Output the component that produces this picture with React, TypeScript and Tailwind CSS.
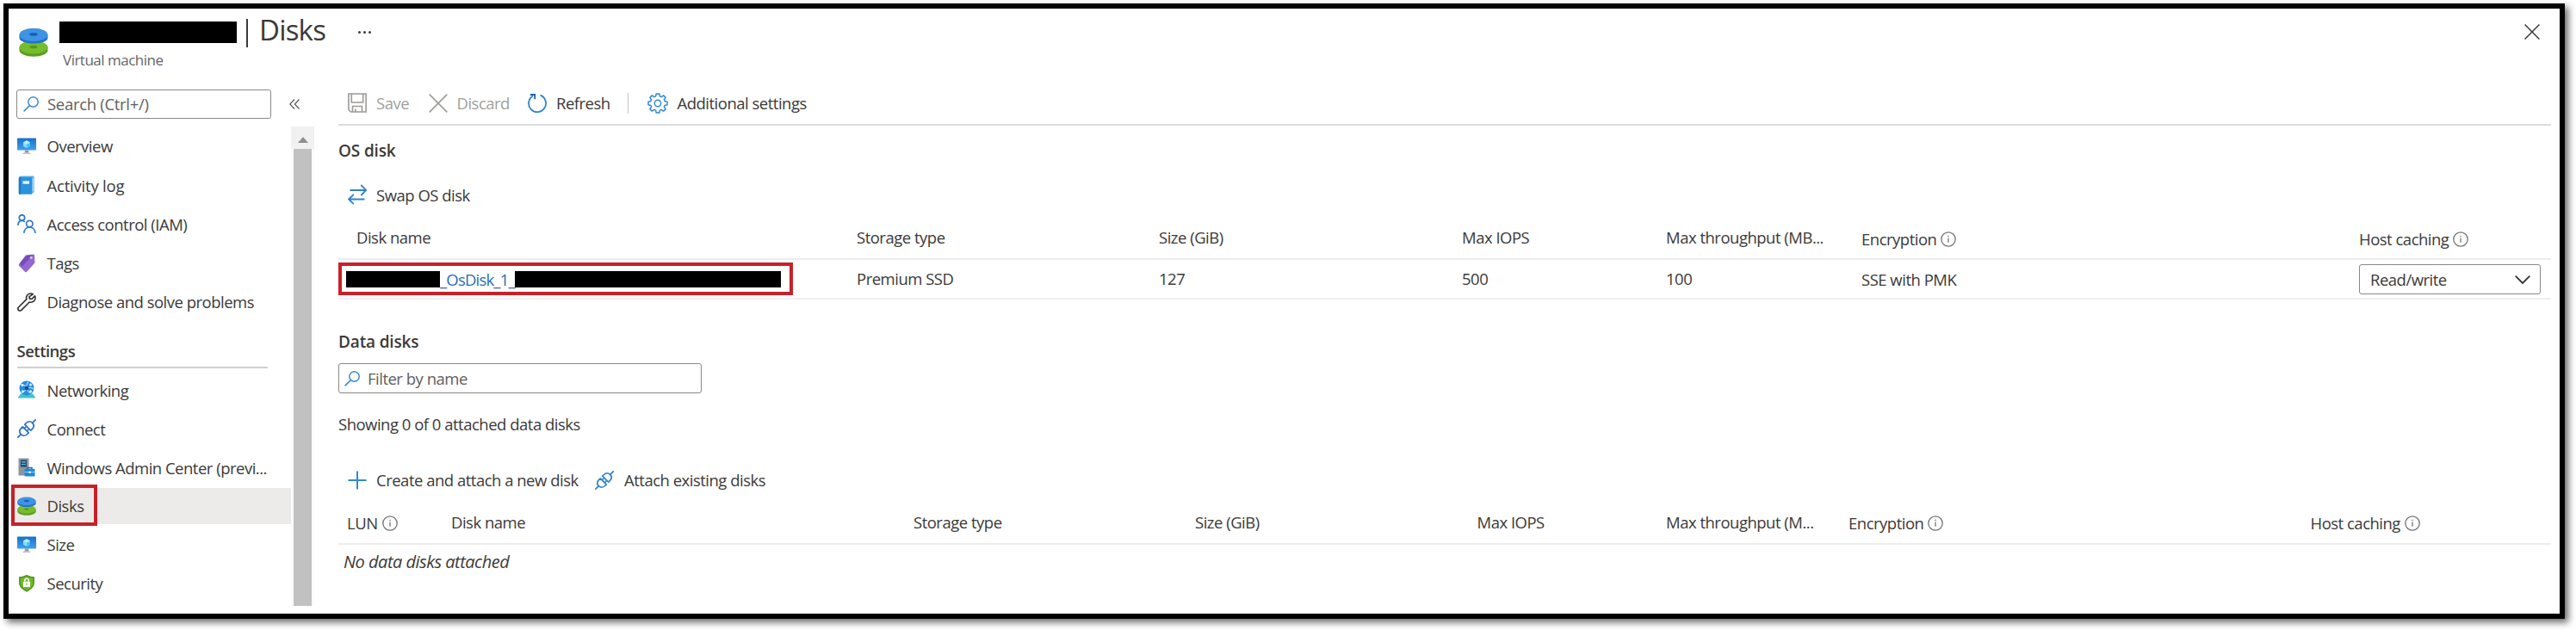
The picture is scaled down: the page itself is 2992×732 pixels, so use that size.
import type { ReactNode } from "react";

type IconProps = { className?: string };

const svgBase = (className = "") => `shrink-0 ${className}`;

function DisksIcon({ className = "size-[22px]" }: IconProps) {
  return (
    <svg viewBox="0 0 34 34" className={svgBase(className)}>
      <path d="M0.5 22.5v4c0 4 7.4 7.2 16.5 7.2s16.5-3.200 16.500-7.200v-4z" fill="#5a9f24" />
      <ellipse cx="17" cy="22.800" rx="16.500" ry="7.600" fill="#76bc2d" />
      <ellipse cx="17" cy="22.500" rx="4.500" ry="1.800" fill="#4e9a20" />
      <path d="M0.500 8.500v3.500c0 4 7.400 6.500 16.500 6.500s16.500-2.500 16.500-6.500V8.500z" fill="#1f74cb" />
      <ellipse cx="17" cy="8.300" rx="16.500" ry="7.600" fill="#3f92e4" />
      <ellipse cx="17" cy="7.800" rx="4.800" ry="1.900" fill="#1560b4" />
    </svg>
  );
}

function MonitorIcon({ className = "size-[22px]" }: IconProps) {
  return (
    <svg viewBox="0 0 22 22" className={svgBase(className)}>
      <defs>
        <linearGradient id="screen" x1="0" y1="0" x2="0" y2="1">
          <stop offset="0" stopColor="#1a6fc9" />
          <stop offset="1" stopColor="#3fa0ee" />
        </linearGradient>
      </defs>
      <rect x="0" y="1.500" width="22" height="14" rx="0.700" fill="url(#screen)" />
      <path d="M9 15.500h4l.6 3.300h-5.200z" fill="#9a9a9a" />
      <path d="M6.500 18.600h9v1.400h-9z" fill="#c2c2c2" />
      <path d="M11 4.200l4 2.200v4.400l-4 2.300-4-2.300V6.400z" fill="#7fe0fb" />
      <path d="M11 8.600l4-2.200v4.400l-4 2.300z" fill="#4fc3ee" />
      <path d="M11 4.200l4 2.200-4 2.200-4-2.200z" fill="#b5f1ff" />
    </svg>
  );
}

function LogIcon() {
  return (
    <svg viewBox="0 0 22 22" className={svgBase("size-[22px]")}>
      <path d="M4 0.500h14.500a1.200 1.200 0 0 1 1.200 1.200v17l-2.200 2.500V2.500H2.300A2 2 0 0 1 4 .5z" fill="#5db4ec" />
      <rect x="1.800" y="1.800" width="15.700" height="20" rx="1.300" fill="#2b92de" />
      <path d="M1.800 3.100a1.300 1.300 0 0 1 1.300-1.300h1v20h-1a1.300 1.300 0 0 1-1.300-1.300z" fill="#1f7ac6" />
      <rect x="6.500" y="6.300" width="7.500" height="3.400" fill="#e8f6ff" />
      <path d="M18.600 2.800v15.500" stroke="#e6f4fd" strokeWidth="0.700" />
    </svg>
  );
}

function PeopleIcon() {
  return (
    <svg viewBox="0 0 22 22" className={svgBase("size-[22px]")} fill="none" stroke="#2f78c8" strokeWidth="1.700">
      <circle cx="5.500" cy="4" r="3.200" />
      <path d="M0.800 12.800c.3-3.200 2-5.400 4.700-5.400 1.400 0 2.500.5 3.400 1.500" />
      <circle cx="14.300" cy="11" r="3.700" />
      <path d="M7.800 21.800c.3-4.200 3-7 6.500-7s6.300 2.800 6.700 7" />
    </svg>
  );
}

function TagIcon() {
  return (
    <svg viewBox="0 0 22 22" className={svgBase("size-[22px]")}>
      <path d="M11 1.200L18.400.6c1 0 1.600.6 1.700 1.500l.3 7.600c0 .6-.2 1.100-.6 1.500l-8.700 9.500c-.6.700-1.500.7-2.200.1l-6.600-6.900c-.7-.7-.7-1.500-.1-2.200L9.500 1.900c.4-.4.900-.7 1.500-.7z" fill="#9469cf" />
      <path d="M3 10.800L10.600 2l7.800-.6L5.400 14.800z" fill="#6c37b3" opacity=".65" />
      <circle cx="16.200" cy="4.300" r="1.500" fill="#d9c6f3" />
    </svg>
  );
}

function WrenchIcon() {
  return (
    <svg viewBox="0 0 22 22" className={svgBase("size-[22px]")} fill="none" stroke="#333" strokeWidth="1.700" strokeLinejoin="round">
      <path d="M18.200 1.800c-2.600-1.600-6-.6-7.100 2-.6 1.300-.6 2.600-.2 3.800L1.500 17a2.300 2.300 0 0 0 0 3.300 2.300 2.300 0 0 0 3.300 0l9.400-9.300c1.300.4 2.800.3 4-.4 2.500-1.300 3.400-4.300 2.300-6.700l-3.500 3.400-2.600-.2-.3-2.500z" />
    </svg>
  );
}

function NetworkIcon() {
  return (
    <svg viewBox="0 0 22 22" className={svgBase("size-[22px]")}>
      <path d="M0.500 20.500l3.500-5h14l3.500 5z" fill="#3cc3cf" />
      <circle cx="11" cy="9" r="8.500" fill="#2b8cdb" />
      <path d="M4 5c2-1 5 .5 7 4M11 9c3-1 6-1 8 1M11 9c-1 3-4 5-6 5M13 1.500C11 4 10.500 6 11 9s3 5 4.500 6" stroke="#9fdcf8" strokeWidth="1.200" fill="none" />
      <circle cx="11" cy="9" r="2.400" fill="#124f9c" />
      <circle cx="6" cy="5.500" r="1.500" fill="#d5f2ff" />
      <circle cx="15.500" cy="5" r="1.500" fill="#d5f2ff" />
      <circle cx="6.500" cy="12.800" r="1.500" fill="#d5f2ff" />
      <circle cx="15.500" cy="12.800" r="1.500" fill="#d5f2ff" />
    </svg>
  );
}

function PlugIcon({ color }: { color: string }) {
  return (
    <svg viewBox="0 0 22 22" className={svgBase("size-[22px]")} fill="none" stroke={color} strokeWidth="1.700" strokeLinejoin="round" strokeLinecap="round">
      <path d="M0.800 21.200l3.500-3.600M17.700 4.300l3.500-3.500" />
      <path d="M4.300 17.600c-2-2.200-1.800-5 .2-7l1.800-1.800 7 7-1.800 1.700c-2 2-5 2.200-7.200.1z" />
      <path d="M17.700 4.400c2 2.200 1.800 5-.2 7l-1.800 1.800-7-7 1.800-1.700c2-2 5-2.200 7.200-.1z" />
      <path d="M8.300 10.700l1.800-1.700M11.400 13.700l1.700-1.700" />
    </svg>
  );
}

function AdminCenterIcon() {
  return (
    <svg viewBox="0 0 22 22" className={svgBase("size-[22px]")}>
      <rect x="1.500" y="0.500" width="12" height="20" rx="0.600" fill="#8b959e" />
      <rect x="4" y="2.500" width="7" height="8" fill="#264a68" />
      <path d="M5 4.800h5M5 7.500h5" stroke="#54c5f0" strokeWidth="1.200" />
      <path d="M12 13v-1.500h5V13" stroke="#1b6ab8" strokeWidth="1.400" fill="none" />
      <rect x="8.500" y="12.800" width="12" height="8.700" rx="0.800" fill="#2488d8" />
      <path d="M8.500 16.500h12" stroke="#9bd4f7" strokeWidth="0.900" />
      <rect x="13.400" y="15.500" width="2.400" height="2.400" fill="#e5f5ff" />
    </svg>
  );
}

function ShieldIcon() {
  return (
    <svg viewBox="0 0 22 22" className={svgBase("size-[22px]")}>
      <path d="M11 0.800c2.600 1.600 5.400 2.300 9 2.400v6.600c0 5-3.500 8.200-9 11-5.500-2.800-9-6-9-11V3.200c3.600-.1 6.400-.8 9-2.400z" fill="#4f9a22" />
      <path d="M11 2.800c2.200 1.200 4.500 1.900 7.300 2v5c0 4-2.800 6.600-7.300 9-4.500-2.400-7.300-5-7.300-9v-5c2.800-.1 5.100-.8 7.300-2z" fill="#76b82c" />
      <rect x="7" y="8.700" width="8" height="6.300" rx="0.600" fill="#fff" />
      <path d="M8.800 8.700V7.300a2.200 2.200 0 0 1 4.400 0v1.400" stroke="#fff" strokeWidth="1.400" fill="none" />
      <circle cx="11" cy="11.700" r="0.900" fill="#76b82c" />
    </svg>
  );
}

function SearchIcon() {
  return (
    <svg viewBox="0 0 18 18" className={svgBase("size-[18px]")} fill="none" stroke="#3b8ad0" strokeWidth="1.500">
      <circle cx="11.500" cy="6.500" r="5.700" />
      <path d="M7.400 10.600L0.600 17.400" />
    </svg>
  );
}

function SaveIcon() {
  return (
    <svg viewBox="0 0 22 23" className={svgBase("h-[23px] w-[22px]")} fill="none" stroke="#9c9a98" strokeWidth="1.600">
      <path d="M0.900 1h20.200v21H3.500L.9 19.500z" />
      <path d="M4.300 1v10h13.400V1M5.500 22v-6.500h11V22M9 22v-3.500" />
    </svg>
  );
}

function CrossIcon({ className, color }: { className: string; color: string }) {
  return (
    <svg viewBox="0 0 22 22" className={svgBase(className)} fill="none" stroke={color} strokeWidth="1.700">
      <path d="M0.700 0.700l20.600 20.600M21.300 0.700L0.700 21.300" />
    </svg>
  );
}

function RefreshIcon() {
  return (
    <svg viewBox="0 0 22 24" className={svgBase("h-6 w-[22px]")} fill="none" stroke="#2f83cc" strokeWidth="1.800">
      <path d="M14.500 2.700a10 10 0 1 1-8.600.8" />
      <path d="M2.800 2h5.400v5.200" stroke="#1d5f9e" />
    </svg>
  );
}

function GearIcon() {
  return (
    <svg viewBox="0 0 24 24" className={svgBase("size-6")} fill="none" stroke="#2f8ad0" strokeWidth="1.500" strokeLinejoin="round">
      <path d="M10.200 1h3.600l.6 2.900 1.700.7 2.500-1.700 2.500 2.500-1.700 2.500.7 1.700 2.900.6v3.600l-2.900.6-.7 1.700 1.700 2.500-2.500 2.500-2.500-1.700-1.700.7-.6 2.900h-3.600l-.6-2.900-1.700-.7-2.500 1.700-2.500-2.500 1.700-2.500-.7-1.700L1 13.800v-3.600l2.900-.6.7-1.700-1.700-2.500 2.500-2.500 2.500 1.700 1.700-.7z" />
      <circle cx="12" cy="12" r="3.700" />
    </svg>
  );
}

function SwapIcon() {
  return (
    <svg viewBox="0 0 22 24" className={svgBase("h-6 w-[22px]")} fill="none" stroke="#2f83cc" strokeWidth="1.800">
      <path d="M2.500 7h18M15.300 1l6 6-6 6" />
      <path d="M19.500 17.500h-18M6.800 11.800l-5.700 5.700 5.700 5.700" />
    </svg>
  );
}

function PlusIcon() {
  return (
    <svg viewBox="0 0 22 22" className={svgBase("size-[22px]")} fill="none" stroke="#2f8ad0" strokeWidth="2">
      <path d="M11 0.500v21M0.500 11h21" />
    </svg>
  );
}

function InfoIcon() {
  return (
    <svg viewBox="0 0 18 18" className={svgBase("size-[18px]")} fill="none" stroke="#767472" strokeWidth="1.300">
      <circle cx="9" cy="9" r="8.200" />
      <path d="M9 7.600v5.200M9 4.800v1.500" />
    </svg>
  );
}

function NavItem({ icon, label, selected, tall, wide }: { icon: ReactNode; label: string; selected?: boolean; tall?: boolean; wide?: boolean }) {
  return (
    <div className={`relative flex items-center pl-[9.500px] ${tall ? "h-[45.200px]" : "h-[44.900px]"}`}>
      {selected && <div className="absolute inset-x-0 top-px bottom-px bg-[#edebe9]" />}
      {selected && <div className="absolute top-[-3px] left-[3px] z-10 h-[48px] w-[100px] border-4 border-[#c8202a]" />}
      <div className="relative flex items-center gap-[13px]">
        {icon}
        <span className={`pt-px ${wide ? "tracking-[-0.200px]" : ""}`}>{label}</span>
      </div>
    </div>
  );
}

function Command({ icon, label, className = "" }: { icon: ReactNode; label: string; className?: string }) {
  return (
    <div className={`flex items-center ${className}`}>
      <span className="flex w-[33px] shrink-0">{icon}</span>
      <span className="pt-px">{label}</span>
    </div>
  );
}

function InfoHeader({ label, className = "" }: { label: string; className?: string }) {
  return (
    <div className={`flex items-center gap-[5px] ${className}`}>
      <span>{label}</span>
      <InfoIcon />
    </div>
  );
}

export default function App() {
  return (
    <div className="h-[732px] w-[2992px] overflow-hidden bg-white pt-1 pl-1 font-['Open_Sans','Noto_Sans',sans-serif] text-[18.500px] leading-6 tracking-[-0.500px] whitespace-nowrap text-[#3b3a39]">
      <div className="flex h-[715px] w-[2975px] flex-col border-6 border-black bg-white shadow-[4px_4px_8px_rgba(0,0,0,0.6)]">
        <header className="flex h-[82px] shrink-0 items-start justify-between pr-[23px] pl-3">
          <div className="flex">
            <DisksIcon className="mt-[22px] size-[34px]" />
            <div className="ml-[13px]">
              <div className="flex h-[52px] items-start">
                <div className="mt-[15px] h-[25px] w-[206px] bg-black" />
                <h1 className="ml-[11px] flex pt-[5px] text-[33px] leading-[40px] tracking-[-0.800px]">
                  <span className="mt-[7px] mr-[13px] h-[33px] w-0.5 bg-[#3b3a39]" />
                  Disks
                </h1>
                <div className="mt-[26px] ml-[38px] flex gap-[3.500px]">
                  <i className="size-[2.500px] rounded-full bg-[#3b3a39]" />
                  <i className="size-[2.500px] rounded-full bg-[#3b3a39]" />
                  <i className="size-[2.500px] rounded-full bg-[#3b3a39]" />
                </div>
              </div>
              <div className="-mt-[4px] ml-1 text-[17px] text-[#666]">Virtual machine</div>
            </div>
          </div>
          <CrossIcon className="mt-[18px] size-[18px]" color="#333" />
        </header>

        <div className="flex min-h-0 flex-1">
          <aside className="flex w-[383px] shrink-0 flex-col pt-3">
            <div className="flex items-center">
              <div className="ml-[9px] flex h-[34px] w-[296px] items-center gap-[10px] rounded-[3px] border-[1.500px] border-[#8a8886] pl-[7px] text-[#605e5c]">
                <SearchIcon />
                <span className="tracking-[-0.300px]">Search (Ctrl+/)</span>
              </div>
              <svg viewBox="0 0 12 12" className="ml-[21px] size-3" fill="none" stroke="#605e5c" strokeWidth="1.300">
                <path d="M6 0.500L0.800 6 6 11.500M11.500 0.500L6.300 6l5.200 5.500" />
              </svg>
            </div>
            <div className="mt-[9.400px] flex">
              <nav className="w-[328px]">
                <NavItem tall icon={<MonitorIcon />} label="Overview" />
                <NavItem tall wide icon={<LogIcon />} label="Activity log" />
                <NavItem tall icon={<PeopleIcon />} label="Access control (IAM)" />
                <NavItem tall icon={<TagIcon />} label="Tags" />
                <NavItem tall icon={<WrenchIcon />} label="Diagnose and solve problems" />
                <h2 className="ml-[9.500px] flex h-[55px] w-[291px] items-center border-b-2 border-[#d2d0ce] pt-[18px] pb-0.5 font-semibold">
                  Settings
                </h2>
                <div className="mt-[2.500px]">
                  <NavItem icon={<NetworkIcon />} label="Networking" />
                  <NavItem icon={<PlugIcon color="#2f6fc4" />} label="Connect" />
                  <NavItem icon={<AdminCenterIcon />} label="Windows Admin Center (previ..." />
                  <NavItem icon={<DisksIcon />} label="Disks" selected />
                  <NavItem icon={<MonitorIcon />} label="Size" />
                  <NavItem icon={<ShieldIcon />} label="Security" />
                </div>
              </nav>
              <div className="flex h-[557px] w-[27px] flex-col items-center bg-[#fafafa]">
                <div className="flex h-[26px] w-full items-center justify-center bg-[#f1f1f1]">
                  <svg viewBox="0 0 12 7" className="mt-1 h-[7px] w-3">
                    <path d="M0 7L6 0l6 7z" fill="#8f8f8f" />
                  </svg>
                </div>
                <div className="w-[21px] flex-1 bg-[#c1c1c1]" />
              </div>
            </div>
          </aside>

          <main className="w-[2570px] pt-[3px]">
            <div className="flex h-[51px] items-center border-b-2 border-[#dcdcdc] pl-[11px]">
              <Command icon={<SaveIcon />} label="Save" className="w-[93.500px] text-[#a19f9d]" />
              <Command icon={<CrossIcon className="size-[22px]" color="#a19f9d" />} label="Discard" className="w-[115.500px] text-[#a19f9d]" />
              <Command icon={<RefreshIcon />} label="Refresh" className="w-[116px]" />
              <div className="mr-[22px] h-6 w-px bg-[#c8c6c4]" />
              <Command icon={<GearIcon />} label="Additional settings" className="gap-[1.500px]" />
            </div>

            <h2 className="flex h-14 items-center pt-0.5 text-[19px] font-semibold tracking-[-0.150px]">OS disk</h2>
            <div className="flex h-12 items-center pl-[11px]">
              <Command icon={<SwapIcon />} label="Swap OS disk" />
            </div>

            <div className="grid h-[52px] grid-cols-[602px_351px_352px_237px_227px_578px_1fr] items-center border-b-2 border-[#ededed] pt-px">
              <div className="pl-[21px]">Disk name</div>
              <div>Storage type</div>
              <div>Size (GiB)</div>
              <div>Max IOPS</div>
              <div>Max throughput (MB...</div>
              <InfoHeader label="Encryption" className="pt-[5px]" />
              <InfoHeader label="Host caching" className="pt-[5px]" />
            </div>
            <div className="grid h-[46px] grid-cols-[602px_351px_352px_237px_227px_578px_1fr] items-center border-b-2 border-[#f0f0f0]">
              <div className="flex h-[38px] w-[528px] items-center border-4 border-[#c8202a] pl-[5px] text-[#2b6cb8]">
                <div className="h-[19px] w-[109px] bg-black" />
                <a className="w-[87px] pt-px tracking-[-0.800px]">_OsDisk_1_</a>
                <div className="h-[19px] w-[309px] bg-black" />
              </div>
              <div>Premium SSD</div>
              <div>127</div>
              <div>500</div>
              <div>100</div>
              <div className="pt-[2px]">SSE with PMK</div>
              <div className="flex h-[35px] w-[211px] items-center justify-between rounded-[3px] border-[1.500px] border-[#8a8886] pt-px pr-[11px] pl-3">
                <span>Read/write</span>
                <svg viewBox="0 0 18 10" className="h-2.5 w-[18px]" fill="none" stroke="#333" strokeWidth="1.800">
                  <path d="M0.700 0.700L9 9l8.300-8.300" />
                </svg>
              </div>
            </div>

            <h2 className="mt-6 flex h-[50px] items-center text-[19px] font-semibold tracking-[-0.150px]">Data disks</h2>
            <div className="flex h-[35px] w-[422px] items-center gap-[9px] rounded-[3px] border-[1.500px] border-[#8a8886] pl-1.5 text-[#605e5c]">
              <SearchIcon />
              <span>Filter by name</span>
            </div>
            <div className="flex h-[70px] items-center pt-px">Showing 0 of 0 attached data disks</div>
            <div className="flex h-[60px] items-center pt-px pl-[11px]">
              <Command icon={<PlusIcon />} label="Create and attach a new disk" className="w-[287px]" />
              <Command icon={<PlugIcon color="#2f83cc" />} label="Attach existing disks" className="gap-px" />
            </div>

            <div className="grid h-[46px] grid-cols-[131px_537px_327px_327.500px_219.500px_212px_536.500px_1fr] items-center border-b-2 border-[#ededed] pb-[5px]">
              <InfoHeader label="LUN" className="pt-[3px] pl-[10px]" />
              <div>Disk name</div>
              <div>Storage type</div>
              <div>Size (GiB)</div>
              <div>Max IOPS</div>
              <div>Max throughput (M...</div>
              <InfoHeader label="Encryption" className="pt-[3px]" />
              <InfoHeader label="Host caching" className="pt-[3px]" />
            </div>
            <div className="flex h-[39px] items-center pt-px pl-[6px] text-[20px] italic">No data disks attached</div>
          </main>
        </div>
      </div>
    </div>
  );
}
